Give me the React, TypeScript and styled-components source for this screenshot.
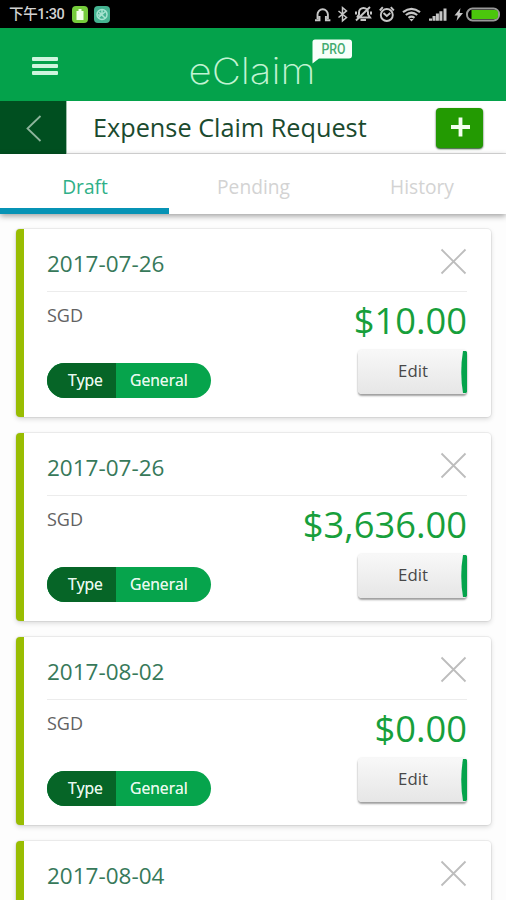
import React from "react";
import styled, { createGlobalStyle } from "styled-components";

const Global = createGlobalStyle`
  * { box-sizing: border-box; }
  body { margin: 0; background: #fdfdfd; overflow: hidden; }
  button { border: 0; padding: 0; font: inherit; }
`;

const Screen = styled.div`
  width: 506px;
  height: 900px;
  overflow: hidden;
  display: flex;
  flex-direction: column;
  background: #fdfdfd;
  font-family: "Open Sans", "Noto Sans", sans-serif;
  white-space: nowrap;
`;

const StatusBar = styled.div`
  height: 28px;
  flex: none;
  display: flex;
  justify-content: space-between;
  background: #000;
`;

const StatusLeft = styled.div`
  display: flex;
  align-items: center;
  padding: 1px 0 0 9px;
`;

const Clock = styled.span`
  width: 56px;
  margin-right: 7px;
  color: #d2d2d2;
  font: 500 14.5px/20px Roboto, "Noto Sans CJK SC", sans-serif;
  letter-spacing: -0.35px;
`;

const AppBadge = styled.span<{ $color: string }>`
  width: 16px;
  height: 17px;
  margin-right: 6px;
  border-radius: 4px;
  background: ${(p) => p.$color};
  display: flex;
`;

const Header = styled.header`
  height: 73px;
  flex: none;
  display: flex;
  background: #04a24b;
  padding-left: 32px;
`;

const MenuButton = styled.button`
  width: 26px;
  height: 19px;
  margin-top: 29px;
  display: flex;
  flex-direction: column;
  gap: 3px;
  background: none;
`;

const MenuLine = styled.span`
  height: 4px;
  width: 26px;
  border-radius: 1px;
  background: #cff5de;
`;

const LogoSvg = styled.svg`
  margin: 8px 0 0 128px;
  width: 170px;
  height: 60px;
`;

const TitleRow = styled.div`
  height: 53px;
  flex: none;
  display: flex;
  background: #fff;
  border-bottom: 1px solid #dedede;
`;

const BackButton = styled.button`
  width: 67px;
  height: 53px;
  flex: none;
  background: #004f20;
  border-right: 1px solid #9dbda9;
`;

const Title = styled.h1`
  margin: 0 0 0 26px;
  width: 343px;
  font-weight: 400;
  font-size: 25.25px;
  line-height: 53px;
  color: #1a4a2e;
`;

const AddButton = styled.button`
  width: 47px;
  height: 40px;
  margin-top: 7px;
  border-radius: 4px;
  background: #239a02;
  box-shadow: 0 1px 2px rgba(0, 50, 0, 0.9);
`;

const Tabs = styled.nav`
  height: 60px;
  flex: none;
  display: grid;
  grid-template-columns: 169px 168px 169px;
  background: #fff;
  box-shadow: 0 2px 6px rgba(0, 0, 0, 0.38);
`;

const Tab = styled.button<{ $active?: boolean }>`
  height: 60px;
  padding: 11px 0 0 1px;
  background: none;
  border-bottom: 6px solid ${(p) => (p.$active ? "#0793b5" : "transparent")};
  color: ${(p) => (p.$active ? "#2fb088" : "#d3d3d3")};
  font-size: 19.2px;
`;

const List = styled.main`
  padding: 15px 15px 0 16px;
  display: flex;
  flex-direction: column;
  gap: 16px;
`;

const Card = styled.article`
  height: 188px;
  flex: none;
  border-radius: 4px;
  border-left: 8.5px solid #99bd02;
  background: #fff;
  box-shadow: 0 0 0 1px rgba(0, 0, 0, 0.05), 0 2px 5px rgba(0, 0, 0, 0.15);
  padding: 12px 24px 0 23px;
`;

const CardHead = styled.div`
  height: 51px;
  display: flex;
  justify-content: space-between;
  border-bottom: 1px solid #ececec;
`;

const DateText = styled.span`
  color: #37795a;
  font-size: 22.5px;
  line-height: 46px;
`;

const CloseButton = styled.button`
  width: 27px;
  height: 27px;
  margin-top: 7px;
  background: none;
`;

const AmountRow = styled.div`
  height: 58px;
  display: flex;
  justify-content: space-between;
`;

const Currency = styled.span`
  color: #626262;
  font-size: 18px;
  line-height: 47px;
`;

const Amount = styled.span`
  color: #179f3b;
  font-size: 36.3px;
  line-height: 57px;
`;

const ActionRow = styled.div`
  display: flex;
  justify-content: space-between;
`;

const TypePill = styled.div`
  width: 164px;
  height: 35px;
  margin-top: 13px;
  border-radius: 18px;
  overflow: hidden;
  display: flex;
  background: #06a44c;
  color: #e6f8ec;
  font-size: 15.7px;
  line-height: 35px;
  text-shadow: 0 0 0.6px #e6f8ec;
`;

const PillLabel = styled.span`
  width: 69px;
  padding-left: 21px;
  background: #066527;
`;

const PillValue = styled.span`
  padding-left: 14px;
`;

const EditButton = styled.button`
  width: 109px;
  height: 44px;
  border-radius: 4px;
  display: flex;
  justify-content: flex-end;
  background: linear-gradient(#f8f8f8, #e6e6e6);
  box-shadow: 0 2px 2px rgba(0, 0, 0, 0.36), 0 0 2px rgba(0, 0, 0, 0.12);
  color: #484848;
  font-size: 16.8px;
  line-height: 42px;
`;

const EditLabel = styled.span`
  width: 30px;
  margin-right: 33px;
`;

const EditEdge = styled.svg`
  width: 6px;
  height: 44px;
`;

function StatusIcons() {
  return (
    <svg width="196" height="28" viewBox="310 0 196 28" fill="none" stroke="#c6c6c6" strokeWidth="1.9">
      <path d="M317.5 19V14.5a5.2 5.2 0 0 1 10.4 0V19M315 20.2h4.5V16M330.4 20.2h-4.5V16" />
      <path d="M338.5 11l8 6.5-4 3.3V7.6l4 3.3-8 6.6" strokeWidth="1.5" />
      <path d="M357 17.5h13l-2-3v-2a4.5 4.5 0 0 0-9 0v2l-2 3M356 20.5L370 7M360.5 20h5.5M356 11.5v3M371 11.5v3" strokeWidth="2" />
      <circle cx="386.8" cy="15" r="6" />
      <path d="M379.8 10.5l3-3.3M393.8 10.5l-3-3.3M383.5 13l3.3 3 3.5-3" />
      <path d="M403 12.2q8.5-6.7 17 0M405.8 15q5.7-4.5 11.4 0M408.5 17.8q3-2.2 6 0" strokeWidth="2.2" />
      <path d="M409.3 19h4.4l-2.2 2.5z" fill="#c6c6c6" stroke="none" />
      <path d="M430.5 20.8v-2.4M434 20.8v-4.8M437.4 20.8v-7.3M440.9 20.8V11.3M445 20.8V8.6" strokeWidth="3" />
      <path d="M460.5 8l-6 7.5h3.2L456.5 21l6.5-8h-3.4z" fill="#c6c6c6" stroke="none" />
      <rect x="467" y="8.6" width="32" height="11.8" rx="5.5" stroke="#999" strokeWidth="2" />
      <path d="M471.5 10H495q3 0 3 3v3q0 3-3 3h-23.5z" fill="#4bc60c" stroke="none" />
    </svg>
  );
}

function Logo() {
  return (
    <LogoSvg viewBox="186 36 170 60">
      <text x="188.5" y="84" fill="#c2f3d3" fontFamily="Inter" fontWeight="200" fontSize="36" textLength="127" lengthAdjust="spacingAndGlyphs">
        eClaim
      </text>
      <path d="M315 39.5h34q3 0 3 3v13q0 3-3 3h-30l-6.5 5V42q0-2.5 2.5-2.5z" fill="#f7fffa" />
      <text x="321.5" y="54" fill="#43ab70" fontFamily="Roboto" fontWeight="500" fontSize="14" textLength="24" lengthAdjust="spacingAndGlyphs">
        PRO
      </text>
    </LogoSvg>
  );
}

function ClaimCard({ date, amount }: { date: string; amount?: string }) {
  return (
    <Card>
      <CardHead>
        <DateText>{date}</DateText>
        <CloseButton aria-label="Remove">
          <svg width="27" height="27" viewBox="0 0 27 27" stroke="#bdbdbd" strokeWidth="1.8">
            <path d="M1.5 1.5l24 24M25.5 1.5l-24 24" />
          </svg>
        </CloseButton>
      </CardHead>
      {amount && (
        <>
          <AmountRow>
            <Currency>SGD</Currency>
            <Amount>{amount}</Amount>
          </AmountRow>
          <ActionRow>
            <TypePill>
              <PillLabel>Type</PillLabel>
              <PillValue>General</PillValue>
            </TypePill>
            <EditButton>
              <EditLabel>Edit</EditLabel>
              <EditEdge viewBox="0 0 6 44">
                <path d="M2 1H5l1 1v40l-1 1H2Q-1.5 22 2 1z" fill="#05a34b" />
              </EditEdge>
            </EditButton>
          </ActionRow>
        </>
      )}
    </Card>
  );
}

const claims = [
  { date: "2017-07-26", amount: "$10.00" },
  { date: "2017-07-26", amount: "$3,636.00" },
  { date: "2017-08-02", amount: "$0.00" },
  { date: "2017-08-04" },
];

export default function App() {
  return (
    <Screen>
      <Global />
      <StatusBar>
        <StatusLeft>
          <Clock>下午1:30</Clock>
          <AppBadge $color="#76cc3c">
            <svg width="16" height="17" viewBox="0 0 16 17" fill="#f2ffe9">
              <path d="M4.5 5h2V3h3v2h2v9h-7z" />
            </svg>
          </AppBadge>
          <AppBadge $color="#45b391">
            <svg width="16" height="17" viewBox="0 0 16 17" fill="none" stroke="#a6e3d0" strokeWidth="1.5">
              <circle cx="8" cy="8.5" r="5" />
              <path d="M4 12l8-7M5 6l6 6M8 4v5M4 9h5" />
            </svg>
          </AppBadge>
        </StatusLeft>
        <StatusIcons />
      </StatusBar>
      <Header>
        <MenuButton aria-label="Menu">
          <MenuLine />
          <MenuLine />
          <MenuLine />
        </MenuButton>
        <Logo />
      </Header>
      <TitleRow>
        <BackButton aria-label="Back">
          <svg width="66" height="53" viewBox="0 0 66 53" fill="none" stroke="#8db59c" strokeWidth="1.8">
            <path d="M40.5 15L27.5 27.5l13 12.5" />
          </svg>
        </BackButton>
        <Title>Expense Claim Request</Title>
        <AddButton aria-label="Add">
          <svg width="47" height="40" viewBox="0 0 47 40" stroke="#f3fff0" strokeWidth="3.8">
            <path d="M15 19h19M24.5 9.5v19" />
          </svg>
        </AddButton>
      </TitleRow>
      <Tabs>
        <Tab $active>Draft</Tab>
        <Tab>Pending</Tab>
        <Tab>History</Tab>
      </Tabs>
      <List>
        {claims.map((c, i) => (
          <ClaimCard key={i} {...c} />
        ))}
      </List>
    </Screen>
  );
}
